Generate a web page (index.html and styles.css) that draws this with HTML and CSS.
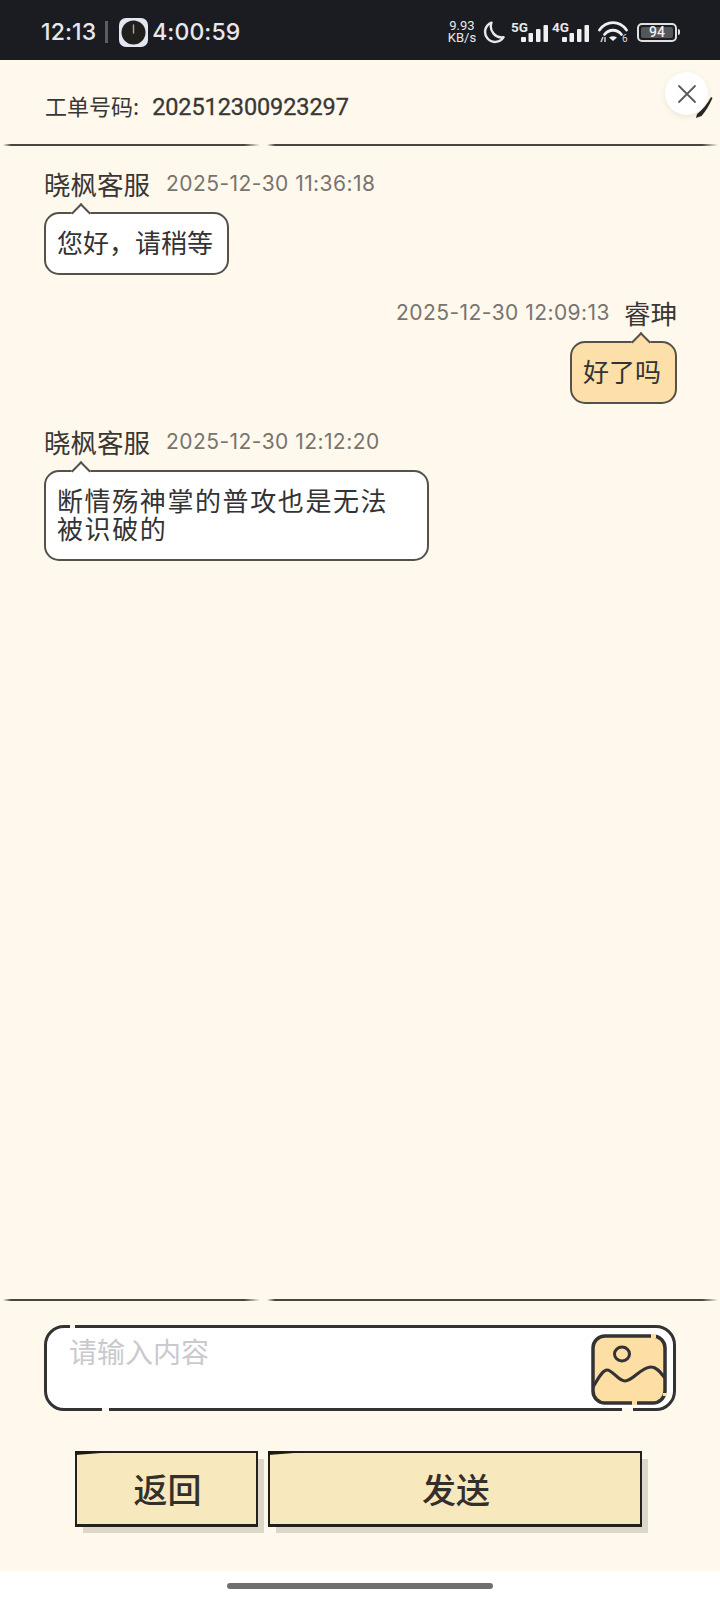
FILE: index.html
```html
<!DOCTYPE html>
<html lang="zh-CN">
<head>
  <meta charset="UTF-8" />
  <meta name="viewport" content="width=device-width, initial-scale=1.0" />
  <title>工单详情</title>
  <link rel="stylesheet" href="styles.css">
</head>
<body>
  <!-- status bar -->
  <div class="status-bar">
    <div class="status-left">
      <span class="clock">12:13</span>
      <span class="status-sep"></span>
      <svg class="timer-icon" width="29" height="29" viewBox="0 0 29 29">
        <rect x="0" y="0" width="29" height="29" rx="7" fill="#e3e7f0" />
        <circle cx="14.5" cy="14.5" r="12" fill="#211f1d" />
        <path d="M14.5 7v8" stroke="#a8a8a8" stroke-width="1.400" stroke-linecap="round" />
      </svg>
      <span class="clock">4:00:59</span>
    </div>
    <div class="status-right">
      <div class="net-speed"><span>9.93</span><span>KB/s</span></div>
      <svg class="moon" width="22" height="23" viewBox="0 0 22 23">
        <path d="M8.500 1.600A10 10 0 1 0 20.600 16.200 A11 11 0 0 1 8.500 1.600Z" fill="none" stroke="#e8e8ea" stroke-width="2.400" stroke-linejoin="round" />
      </svg>
      <div class="signal">
        <span class="sig-label">5G</span>
        <svg width="29" height="17" viewBox="0 0 29 17">
          <rect x="0" y="12" width="5" height="5" rx="1" fill="#f0f0f0" />
          <rect x="7.500" y="8" width="4.500" height="9" rx="1" fill="#f0f0f0" />
          <rect x="15" y="4" width="4.500" height="13" rx="1" fill="#f0f0f0" />
          <rect x="22.500" y="0" width="4.500" height="17" rx="1" fill="#f0f0f0" />
        </svg>
      </div>
      <div class="signal">
        <span class="sig-label">4G</span>
        <svg width="29" height="17" viewBox="0 0 29 17">
          <rect x="0" y="12" width="5" height="5" rx="1" fill="#f0f0f0" />
          <rect x="7.500" y="8" width="4.500" height="9" rx="1" fill="#f0f0f0" />
          <rect x="15" y="4" width="4.500" height="13" rx="1" fill="#f0f0f0" />
          <rect x="22.500" y="0" width="4.500" height="17" rx="1" fill="#f0f0f0" />
        </svg>
      </div>
      <svg class="wifi" width="30" height="22" viewBox="0 0 30 22">
        <path d="M1.500 9C8.500 -0.800 21.500 -0.800 28.500 9" fill="none" stroke="#f0f0f0" stroke-width="2.800" stroke-linecap="round" />
        <path d="M6.500 13.500C11 7.800 19 7.800 23.500 13.500" fill="none" stroke="#f0f0f0" stroke-width="2.800" stroke-linecap="round" />
        <path d="M11 16.500C13.500 14.800 16.500 14.800 19 16.500L15 20Z" fill="#f0f0f0" />
        <path d="M3 21l2-5M7 21v-5" stroke="#c8c8c8" stroke-width="1.600" />
        <text class="wifi-gen" x="24" y="21">6</text>
      </svg>
      <div class="battery">
        <div class="battery-body"><span class="battery-level">94</span></div>
        <span class="battery-tip"></span>
      </div>
    </div>
  </div>

  <div class="page">
    <div class="ticket-head">工单号码:<span class="ticket-no">202512300923297</span></div>

    <div class="rule">
      <span class="rule-short"></span>
      <span class="rule-long"></span>
    </div>

    <!-- messages -->
    <div class="messages">
      <div class="msg">
        <div class="msg-meta">
          <span class="msg-name">晓枫客服</span>
          <span class="msg-time">2025-12-30 11:36:18</span>
        </div>
        <div class="bubble">您好，请稍等</div>
      </div>

      <div class="msg msg-mine">
        <div class="msg-meta">
          <span class="msg-time">2025-12-30 12:09:13</span>
          <span class="msg-name">睿珅</span>
        </div>
        <div class="bubble">好了吗</div>
      </div>

      <div class="msg">
        <div class="msg-meta">
          <span class="msg-name">晓枫客服</span>
          <span class="msg-time">2025-12-30 12:12:20</span>
        </div>
        <div class="bubble bubble-wide">断情殇神掌的普攻也是无法被识破的</div>
      </div>
    </div>

    <div class="rule">
      <span class="rule-short"></span>
      <span class="rule-long"></span>
    </div>

    <!-- input -->
    <div class="composer">
      <span class="composer-hint">请输入内容</span>
      <span class="composer-nick"></span>
      <svg class="pic-btn" width="76" height="71" viewBox="0 0 76 71">
        <rect x="2" y="2" width="72" height="67" rx="12" fill="#fddfa6" stroke="#333" stroke-width="3.500" />
        <ellipse cx="31" cy="20" rx="7.500" ry="7" fill="none" stroke="#333" stroke-width="3" />
        <path d="M2 53C6 47 11 36 16 36C22 36 27 47 34 47C42 47 50 33 60 33C66 33 70 39 74 44" fill="none" stroke="#333" stroke-width="3.200" stroke-linejoin="round" />
        <path d="M60 2h5M74 59v3M46 69h-5" stroke="#fddfa6" stroke-width="4" />
      </svg>
    </div>

    <!-- buttons -->
    <div class="actions">
      <button class="btn btn-back" type="button">返回</button>
      <button class="btn btn-send" type="button">发送</button>
    </div>

    <button class="close-btn" type="button" aria-label="关闭">
      <svg width="20" height="20" viewBox="0 0 20 20">
        <path d="M2 2l16 16M18 2L2 18" stroke="#5a5a5a" stroke-width="1.800" stroke-linecap="round" />
      </svg>
    </button>
    <svg class="close-tick" width="18" height="21" viewBox="0 0 18 21">
      <path d="M16 0L17.500 1C14.500 8 11 14 6.500 19L1 21L2 17C7 13 12.500 7 16 0Z" fill="#2c2620" />
    </svg>
  </div>

  <div class="home-area">
    <span class="home-bar"></span>
  </div>
</body>
</html>
```

FILE: styles.css
```css
:root {
  --cream: #fff8ed;
  --ink: #333;
  --line: #55514b;
  --time: #78746f;
  --mine: #fde0a9;
  --btn: #f8e8bd;
  --cjk: "Noto Sans CJK SC", sans-serif;
  --num: Roboto, "Noto Sans CJK SC", sans-serif;
  --num-wide: Inter, "Noto Sans CJK SC", sans-serif;
}
* {
  box-sizing: border-box;
}
body {
  margin: 0;
  width: 720px;
  height: 1600px;
  display: flex;
  flex-direction: column;
  background: #fff;
  font-family: var(--cjk);
  color: var(--ink);
  overflow: hidden;
}
/* ---------- STATUS BAR ---------- */
.status-bar {
  height: 60px;
  flex: none;
  background: #1a1c22;
  display: flex;
  align-items: center;
  justify-content: space-between;
  padding: 4px 40px 0 41px;
  color: #e8e8ea;
}
.status-left {
  display: flex;
  align-items: center;
}
.clock {
  font-family: var(--num-wide);
  font-size: 23px;
  font-weight: 500;
  letter-spacing: 0.100px;
}
.status-sep {
  width: 3px;
  height: 22px;
  background: #5c5d62;
  margin: 0 11px 0 9px;
}
.timer-icon {
  margin-right: 4px;
}
.status-right {
  display: flex;
  align-items: center;
}
.net-speed {
  display: flex;
  flex-direction: column;
  font-family: var(--num);
  font-size: 13px;
  line-height: 12px;
  margin-right: 7px;
  width: 28px;
  align-items: center;
}
.moon {
  margin-right: 6px;
}
.signal {
  display: flex;
  align-items: flex-end;
  position: relative;
  padding-left: 10px;
  margin-right: 2px;
  height: 20px;
}
.sig-label {
  position: absolute;
  left: 0;
  top: 0;
  font-family: var(--num);
  font-size: 13.500px;
  line-height: 10px;
  font-weight: 700;
}
.wifi {
  margin: 0 9px 0 5px;
}
.wifi-gen {
  font-family: var(--num);
  font-size: 10px;
  fill: #d8d8d8;
}
.battery {
  display: flex;
  align-items: center;
}
.battery-body {
  width: 40px;
  height: 19px;
  border: 2px solid #e0e0e0;
  border-radius: 5px;
  padding: 2px;
  display: flex;
}
.battery-level {
  flex: 1;
  background: #55565a;
  border-radius: 2px;
  font-family: var(--num);
  font-size: 14px;
  font-weight: 500;
  line-height: 11px;
  text-align: center;
  color: #eee;
}
.battery-tip {
  width: 2px;
  height: 6px;
  margin-left: 1px;
  background: #e0e0e0;
  border-radius: 0 2px 2px 0;
}
/* ---------- PAGE ---------- */
.page {
  position: relative;
  flex: none;
  height: 1511px;
  padding-bottom: 44px;
  background: var(--cream);
  display: flex;
  flex-direction: column;
}
.ticket-head {
  flex: none;
  height: 84px;
  padding: 27px 0 0 45px;
  font-size: 22px;
  line-height: 36px;
  color: #3a3733;
}
.ticket-no {
  margin-left: 13px;
  font-family: var(--num);
  font-size: 23.500px;
  letter-spacing: -0.100px;
  -webkit-text-stroke: 0.300px #3a3733;
}
.rule {
  flex: none;
  display: flex;
  gap: 7px;
  height: 2px;
  padding: 0 2px 0 3px;
}
.rule-short,
.rule-long {
  height: 2px;
  background: linear-gradient(90deg, rgba(74, 69, 62, 0) 0, #4a453e 8px, #4a453e calc(100% - 16px), rgba(74, 69, 62, 0) 100%);
}
.rule-short {
  width: 257px;
}
.rule-long {
  flex: 1;
}
/* ---------- MESSAGES ---------- */
.messages {
  flex: 1;
  padding: 18px 43px 0 44px;
  display: flex;
  flex-direction: column;
  gap: 18px;
}
.msg {
  display: flex;
  flex-direction: column;
  align-items: flex-start;
}
.msg-mine {
  align-items: flex-end;
}
.msg-meta {
  display: flex;
  align-items: center;
  gap: 16px;
  height: 38px;
  margin-bottom: 10px;
}
.msg-mine .msg-meta {
  gap: 14px;
}
.msg-name {
  font-size: 26.500px;
  color: #3a3733;
}
.msg-time {
  font-family: var(--num-wide);
  font-size: 21px;
  letter-spacing: 0.450px;
  color: var(--time);
}
.bubble {
  position: relative;
  background: #fff;
  border: 2px solid var(--line);
  border-radius: 15px;
  padding: 14px 14px 17px 11px;
  font-size: 26px;
  line-height: 28px;
  color: #333;
}
.bubble::before {
  content: "";
  position: absolute;
  top: -8px;
  left: 28px;
  width: 12px;
  height: 12px;
  background: inherit;
  border-top: 2px solid var(--line);
  border-left: 2px solid var(--line);
  transform: rotate(45deg);
}
.msg-mine .bubble {
  background: var(--mine);
}
.msg-mine .bubble::before {
  left: auto;
  right: 27px;
}
.bubble-wide {
  width: 385px;
  letter-spacing: 1.600px;
}
/* ---------- COMPOSER ---------- */
.composer {
  position: relative;
  flex: none;
  margin: 24px 44px 0 44px;
  height: 86px;
  background: #fff;
  border: 3px solid var(--ink);
  border-radius: 20px;
  display: flex;
  justify-content: space-between;
  padding: 6px 6px 3px 22px;
}
/* little breaks in the hand-drawn outline */
.composer::before,
.composer::after,
.composer-nick {
  content: "";
  position: absolute;
  height: 3px;
  background: var(--cream);
}
.composer::before {
  top: -3px;
  left: 23px;
  width: 5px;
}
.composer::after {
  bottom: -3px;
  right: 40px;
  width: 11px;
}
.composer-nick {
  bottom: -3px;
  left: 55px;
  width: 7px;
}
.composer-hint {
  font-size: 28px;
  line-height: 34px;
  color: #c9c9ce;
}
/* ---------- BUTTONS ---------- */
.actions {
  flex: none;
  display: flex;
  gap: 10px;
  margin: 40px 0 0 75px;
}
.btn {
  position: relative;
  height: 76px;
  background: var(--btn);
  border-style: solid;
  border-color: #24201b;
  border-width: 2px 2px 3px 2px;
  box-shadow: 7px 7px 0 -1px #dcd7c8;
  font-family: var(--cjk);
  font-size: 34px;
  font-weight: 500;
  color: #33302b;
  padding: 0 0 0 2px;
}
/* thicker pen stroke at the top left corner */
.btn::before {
  content: "";
  position: absolute;
  top: -2px;
  left: -2px;
  width: 36px;
  height: 4px;
  background: #1d1a16;
  clip-path: polygon(0 0, 100% 30%, 0 100%);
}
.btn-back {
  width: 183px;
}
.btn-send {
  width: 374px;
}
/* ---------- CLOSE ---------- */
.close-btn {
  position: absolute;
  top: 12px;
  left: 665px;
  width: 43px;
  height: 43px;
  border: 0;
  border-radius: 50%;
  background: #fff;
  box-shadow: 0 2px 6px rgba(0, 0, 0, 0.08);
  display: flex;
  align-items: center;
  justify-content: center;
  padding: 0;
}
.close-tick {
  position: absolute;
  top: 37px;
  left: 695px;
}
/* ---------- HOME BAR ---------- */
.home-area {
  flex: 1;
  display: flex;
  justify-content: center;
  padding-top: 12px;
}
.home-bar {
  width: 266px;
  height: 6px;
  border-radius: 3px;
  background: #6f6f6f;
}
```
